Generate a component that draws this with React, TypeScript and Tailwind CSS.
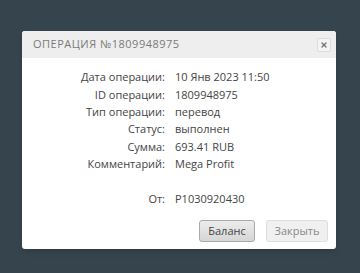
import React from 'react';
import { X } from 'lucide-react';

const rows: [string, string][] = [
  ['Дата операции:', '10 Янв 2023 11:50'],
  ['ID операции:', '1809948975'],
  ['Тип операции:', 'перевод'],
  ['Статус:', 'выполнен'],
  ['Сумма:', '693.41 RUB'],
  ['Комментарий:', 'Mega Profit'],
];

export default function App() {
  return (
    <div
      className="w-[360px] h-[273px] bg-[#36454d] pt-[31px] pl-[22px]"
      style={{ fontFamily: '"Open Sans", "DejaVu Sans", sans-serif' }}
    >
      <div className="w-[314px] h-[218px] bg-white rounded-[3px] shadow-md overflow-hidden flex flex-col">
        {/* Header */}
        <div className="h-[27px] bg-[#eeeeee] flex items-center justify-between pl-[11px] pr-[5px]">
          <span className="text-[11px] tracking-[0.5px] text-[#7a7a7a] uppercase">Операция №1809948975</span>
          <button className="w-[14px] h-[14px] rounded-[2px] border border-[#dcdcdc] bg-[#f4f4f4] flex items-center justify-center text-[#777]">
            <X className="w-[8px] h-[8px]" strokeWidth={4} />
          </button>
        </div>

        {/* Body */}
        <div className="flex flex-col pt-[11px] text-[11px] text-[#444]">
          {rows.map(([label, value]) => (
            <div key={label} className="flex h-[17.3px] items-center">
              <span className="w-[143px] text-right">{label}</span>
              <span className="pl-[10px]">{value}</span>
            </div>
          ))}
          <div className="flex h-[17px] items-center mt-[18px]">
            <span className="w-[143px] text-right">От:</span>
            <span className="pl-[10px]">P1030920430</span>
          </div>
        </div>

        {/* Footer */}
        <div className="flex justify-end gap-[11px] pr-[8px] mt-[12px]">
          <button className="w-[56px] h-[22px] rounded-[3px] border border-[#a9a9a9] bg-gradient-to-b from-[#ececec] to-[#d6d6d6] text-[11px] text-[#444]">
            Баланс
          </button>
          <button className="w-[62px] h-[22px] rounded-[3px] border border-[#dddddd] bg-[#f0f0f0] text-[11px] text-[#888]">
            Закрыть
          </button>
        </div>
      </div>
    </div>
  );
}
